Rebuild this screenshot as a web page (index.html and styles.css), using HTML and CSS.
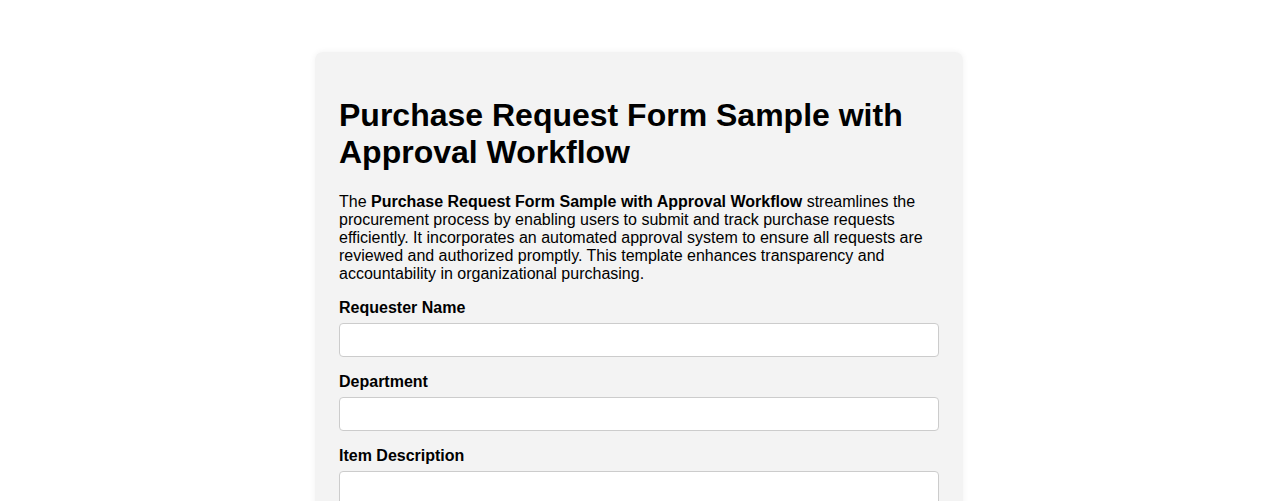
FILE: index.html
```html
<!DOCTYPE html>
<html lang="en">
<head>
    <meta charset="UTF-8">
    <meta name="viewport" content="width=device-width, initial-scale=1.0">
    <title>Purchase Request Form Sample with Approval Workflow</title>
    <link rel="stylesheet" href="styles.css">
</head>
<body>
    <div class="container">
        <h1>Purchase Request Form Sample with Approval Workflow</h1>
        <p>The <strong>Purchase Request Form Sample with Approval Workflow</strong> streamlines the procurement process by enabling users to submit and track purchase requests efficiently. It incorporates an automated approval system to ensure all requests are reviewed and authorized promptly. This template enhances transparency and accountability in organizational purchasing.</p>
        <form class="request-form">
            <div class="form-group">
                <label for="requester">Requester Name</label>
                <input type="text" id="requester" name="requester">
            </div>
            <div class="form-group">
                <label for="department">Department</label>
                <input type="text" id="department" name="department">
            </div>
            <div class="form-group">
                <label for="item">Item Description</label>
                <textarea id="item" name="item" rows="4"></textarea>
            </div>
            <div class="form-group">
                <label for="quantity">Quantity</label>
                <input type="number" id="quantity" name="quantity">
            </div>
            <button type="submit">Submit Request</button>
        </form>
    </div>
</body>
</html>
```

FILE: styles.css
```css
body {
    margin: 0;
    background: #fff;
    color: #000;
    font-family: "Liberation Sans", Arial, sans-serif;
}
.container {
    width: 600px;
    margin: 52px auto;
    padding: 24px;
    background: #f3f3f3;
    border-radius: 8px;
    box-shadow: 0 0 6px rgba(0, 0, 0, 0.06);
}
.container h1 {
    font-size: 32px;
    margin: 21.44px 0;
}
.container p {
    margin: 16px 0;
}
.form-group {
    margin-bottom: 16px;
}
.form-group label {
    display: block;
    margin-bottom: 6px;
    font-weight: bold;
}
.form-group input,
.form-group textarea {
    display: block;
    width: 100%;
    box-sizing: border-box;
    padding: 7px 8px;
    border: 1px solid #ccc;
    border-radius: 4px;
    background: #fff;
    font-family: inherit;
    font-size: 16px;
}
.request-form button {
    padding: 10px 20px;
    background: #333;
    border: none;
    border-radius: 4px;
    color: #fff;
    font-size: 16px;
}
```
